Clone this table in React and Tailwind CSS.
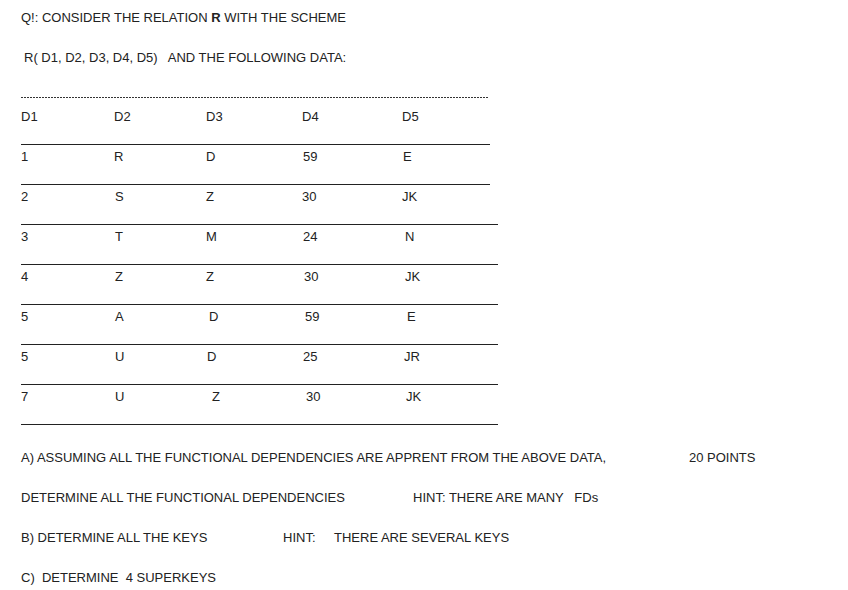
export default function App() {
  // Table data: each cell is [text, extra left padding class]
  const rows = [
    [["1", ""], ["R", ""], ["D", "pl-[1px]"], ["59", "pl-[1px]"], ["E", "pl-[1px]"]],
    [["2", ""], ["S", "pl-[1px]"], ["Z", "pl-[1px]"], ["30", ""], ["JK", ""]],
    [["3", ""], ["T", "pl-[1px]"], ["M", "pl-[1px]"], ["24", "pl-[1px]"], ["N", "pl-[3px]"]],
    [["4", ""], ["Z", "pl-[1px]"], ["Z", "pl-[1px]"], ["30", "pl-[2px]"], ["JK", "pl-[3px]"]],
    [["5", ""], ["A", "pl-[1px]"], ["D", "pl-[4px]"], ["59", "pl-[3px]"], ["E", "pl-[5px]"]],
    [["5", ""], ["U", "pl-[1px]"], ["D", "pl-[2px]"], ["25", "pl-[1px]"], ["JR", "pl-[2px]"]],
    [["7", ""], ["U", "pl-[1px]"], ["Z", "pl-[7px]"], ["30", "pl-[4px]"], ["JK", "pl-[4px]"]],
  ];

  const grid = "grid grid-cols-[93px_91px_97px_100px_1fr] leading-[20px]";

  return (
    <div className="min-h-screen bg-white text-[#222] text-[13px] font-['Liberation_Sans',Arial,sans-serif] px-[21px] pt-[8px]">
      {/* Heading */}
      <p className="leading-[20px]">
        Q!: CONSIDER THE RELATION <b>R</b> WITH THE SCHEME
      </p>
      <p className="leading-[20px] mt-[20px] pl-[3px] whitespace-pre">
        R( D1, D2, D3, D4, D5)   AND THE FOLLOWING DATA:
      </p>

      {/* Table */}
      <div className="mt-[29px] w-[467px] h-px bg-[repeating-linear-gradient(to_right,#333_0_2px,transparent_2px_3px)]" />
      <div className={grid + " mt-[9px] pb-[17px] w-[469px] border-b border-[#222]"}>
        <span>D1</span>
        <span>D2</span>
        <span className="pl-[1px]">D3</span>
        <span>D4</span>
        <span>D5</span>
      </div>
      {rows.map((row, i) => (
        <div
          key={i}
          className={
            grid +
            " pt-[2px] pb-[17px] border-b border-[#222] " +
            (i === 0 ? "w-[469px]" : "w-[477px]")
          }
        >
          {row.map(([text, pad], j) => (
            <span key={j} className={pad}>
              {text}
            </span>
          ))}
        </div>
      ))}

      {/* Questions */}
      <div className="mt-[23px] flex leading-[20px]">
        <span className="w-[668px] shrink-0">
          A) ASSUMING ALL THE FUNCTIONAL DEPENDENCIES ARE APPRENT FROM THE ABOVE DATA,
        </span>
        <span>20 POINTS</span>
      </div>
      <div className="mt-[20px] flex leading-[20px] whitespace-pre">
        <span className="w-[392px] shrink-0">DETERMINE ALL THE FUNCTIONAL DEPENDENCIES</span>
        <span>HINT: THERE ARE MANY   FDs</span>
      </div>
      <div className="mt-[20px] flex leading-[20px]">
        <span className="w-[262px] shrink-0">B) DETERMINE ALL THE KEYS</span>
        <span className="w-[51px] shrink-0">HINT:</span>
        <span>THERE ARE SEVERAL KEYS</span>
      </div>
      <p className="mt-[20px] leading-[20px] whitespace-pre">C)  DETERMINE  4 SUPERKEYS</p>
    </div>
  );
}
